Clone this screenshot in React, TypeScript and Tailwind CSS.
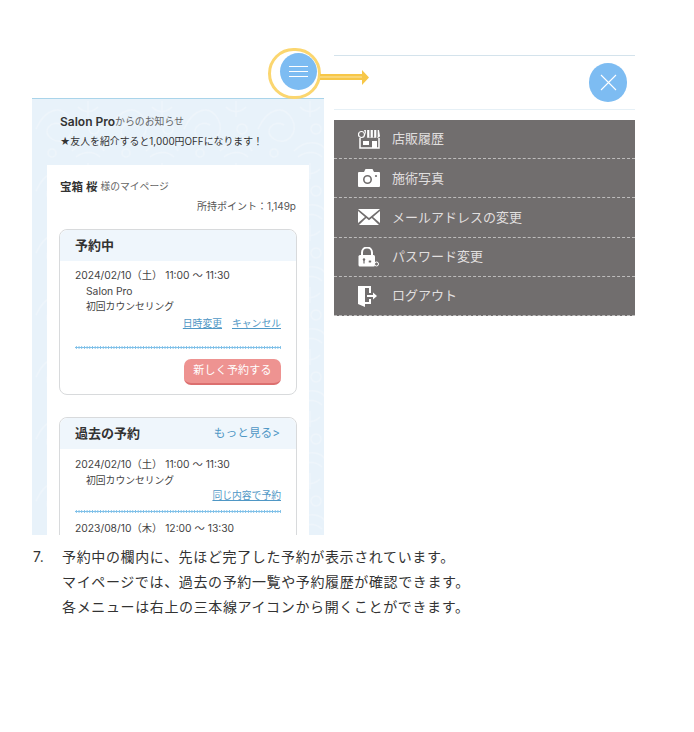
import React from "react";

const font = { fontFamily: '"Inter","Noto Sans CJK JP",sans-serif' };

function Store() {
  return (
    <svg width="22" height="20" viewBox="0 0 22 20" fill="none">
      <path d="M6 1h15l1 6a2 2 0 0 1-3.4 1 2 2 0 0 1-3.3 0 2 2 0 0 1-3.3 0 2 2 0 0 1-3.300 0z" fill="#fff" />
      <path d="M8.500 1v7M12 1v7M15.500 1v7M19 1v7" stroke="#716e6e" strokeWidth="1.300" />
      <circle cx="3.500" cy="5.500" r="3" stroke="#fff" strokeWidth="1.200" />
      <path d="M2 9v10h19V9" stroke="#fff" strokeWidth="1.500" />
      <rect x="14" y="12" width="5" height="7" fill="#fff" />
      <rect x="5" y="12" width="6" height="4" fill="#fff" />
    </svg>
  );
}
function Camera() {
  return (
    <svg width="22" height="18" viewBox="0 0 22 18">
      <path d="M1 3h5l1.500-3h7L16 3h5a1 1 0 0 1 1 1v13a1 1 0 0 1-1 1H1a1 1 0 0 1-1-1V4a1 1 0 0 1 1-1z" fill="#fff" />
      <circle cx="9.500" cy="10.500" r="3.700" fill="none" stroke="#716e6e" strokeWidth="1.600" />
      <circle cx="18" cy="7" r="1.100" fill="#716e6e" />
    </svg>
  );
}
function Mail() {
  return (
    <svg width="22" height="16" viewBox="0 0 22 16">
      <path d="M0 0h22L11 9z" fill="#fff" />
      <path d="M0 2l7 6-7 6zM22 2l-7 6 7 6zM8.200 9L11 11.300 13.800 9 21 16H1z" fill="#fff" />
    </svg>
  );
}
function Lock() {
  return (
    <svg width="22" height="20" viewBox="0 0 22 20">
      <path d="M4 8V5.500a5 5 0 0 1 10 0V8" fill="none" stroke="#fff" strokeWidth="2" />
      <rect x="0.500" y="8" width="16.500" height="11.500" rx="1.500" fill="#fff" />
      <circle cx="6" cy="12.500" r="1.200" fill="#716e6e" />
      <rect x="5.400" y="12.500" width="1.200" height="4" fill="#716e6e" />
      <circle cx="12" cy="14.500" r="1.600" fill="#716e6e" stroke="#fff" strokeWidth="0.700" />
      <circle cx="18.500" cy="17" r="2" fill="#716e6e" stroke="#fff" strokeWidth="1" />
      <path d="M13 15l4 1.500" stroke="#fff" strokeWidth="1" />
    </svg>
  );
}
function Logout() {
  return (
    <svg width="20" height="22" viewBox="0 0 20 22">
      <path d="M0 1h13v7h-2V3H7v14h4v-3h2v5H7v3l-7-3z" fill="#fff" />
      <path d="M9 10h6V7.500l4 3.500-4 3.500V12H9z" fill="#fff" />
    </svg>
  );
}

const menu: [React.ReactNode, string][] = [
  [<Store />, "店販履歴"],
  [<Camera />, "施術写真"],
  [<Mail />, "メールアドレスの変更"],
  [<Lock />, "パスワード変更"],
  [<Logout />, "ログアウト"],
];

function Link({ children }: { children: React.ReactNode }) {
  return <span className="text-[9.800px] leading-none text-[#4f97c5] underline">{children}</span>;
}

function Dots() {
  return <div className="h-[3px] bg-[radial-gradient(circle,#7fc0e8_1.100px,transparent_1.300px)] bg-[length:2.700px_3px]" />;
}

function Head({ children }: { children: React.ReactNode }) {
  return (
    <div className="flex h-[31px] items-center justify-between rounded-t-[8px] bg-[#eff6fc] pl-[15px] pr-[16px]">
      {children}
    </div>
  );
}

function Lace() {
  return (
    <svg className="absolute inset-0 h-full w-full" aria-hidden="true">
      <defs>
        <pattern id="lace" width="74" height="62" patternUnits="userSpaceOnUse">
          <g fill="none" stroke="#eef5fb" strokeWidth="1.500">
            <path d="M4 30c10-22 26-24 34-10s-6 28-18 20 0-20 10-14" />
            <path d="M40 52c12-12 28-10 32 0M44 58c8-6 18-6 24 0" />
            <path d="M46 8c6 6 14 6 20 0M56 2v16" />
            <circle cx="20" cy="54" r="4" />
            <circle cx="62" cy="30" r="5" />
          </g>
        </pattern>
      </defs>
      <rect width="100%" height="100%" fill="url(#lace)" />
    </svg>
  );
}

export default function App() {
  return (
    <div className="relative h-[732px] w-[694px] overflow-hidden bg-white text-[#333]" style={font}>
      <div className="flex items-start pl-[32px] pt-[46px]">
        <div className="flex h-[489px] w-[292px] flex-col overflow-hidden">
          <div className="flex h-[53px] shrink-0 justify-end border-b border-[#a9d4ea] bg-white pr-[7px] pt-[7px]">
            <div className="flex h-[37px] w-[37px] flex-col items-center justify-center gap-[4px] rounded-full bg-[#7dbcf2]">
              <div className="h-px w-[19px] bg-white" />
              <div className="h-px w-[19px] bg-white" />
              <div className="h-px w-[19px] bg-white" />
            </div>
          </div>
          <div className="relative flex min-h-0 flex-1 flex-col bg-[#e8f2fa] px-[15px]">
            <Lace />
            <div className="relative h-[66px] shrink-0 pl-[13px] pt-[14px] text-[9.900px]">
              <div className="flex h-[17px] items-center text-[#666]">
                <span className="text-[12px] font-semibold text-[#333]">Salon Pro</span>からのお知らせ
              </div>
              <div className="mt-[3px] flex h-[17px] items-center text-[#333]">★友人を紹介すると1,000円OFFになります！</div>
            </div>
            <div className="relative flex min-h-0 flex-1 flex-col bg-white px-[12px] pt-[14px]">
              <div className="flex h-[17px] items-center pl-[1px] text-[9.800px] text-[#666]">
                <span className="mr-[3px] text-[11.500px] font-semibold text-[#333]">宝箱 桜</span>様のマイページ
              </div>
              <div className="mt-[3px] flex h-[17px] items-center justify-end pr-px text-[10px] text-[#555]">
                所持ポイント：1,149p
              </div>
              <div className="mt-[15px] h-[166px] shrink-0 rounded-[8px] border border-[#d8dadc]">
                <Head>
                  <span className="text-[13px] font-semibold text-[#333]">予約中</span>
                </Head>
                <div className="px-[15px] pt-[7px] text-[10.300px] leading-[15.500px] text-[#444]">
                  <div>2024/02/10（土） 11:00 ～ 11:30</div>
                  <div className="pl-[11px]">Salon Pro</div>
                  <div className="pl-[11px] text-[9.800px]">初回カウンセリング</div>
                  <div className="mt-[1px] flex h-[16px] items-center justify-end gap-[10px]">
                    <Link>日時変更</Link>
                    <Link>キャンセル</Link>
                  </div>
                  <div className="mt-[14px]">
                    <Dots />
                  </div>
                  <div className="mt-[10px] flex justify-end">
                    <div className="flex h-[26px] w-[97px] items-center justify-center rounded-[7px] border-b-2 border-[#dc6f6f] bg-[#ee9391] text-[11px] tracking-[0.2px] text-white">
                      新しく予約する
                    </div>
                  </div>
                </div>
              </div>
              <div className="mt-[22px] h-[200px] shrink-0 rounded-[8px] border border-[#d8dadc]">
                <Head>
                  <span className="text-[13px] font-semibold text-[#333]">過去の予約</span>
                  <span className="text-[11.700px] text-[#4f97c5]">もっと見る&gt;</span>
                </Head>
                <div className="px-[15px] pt-[8px] text-[10.300px] leading-[15.500px] text-[#444]">
                  <div>2024/02/10（土） 11:00 ～ 11:30</div>
                  <div className="pl-[11px] text-[9.800px]">初回カウンセリング</div>
                  <div className="flex h-[16px] items-center justify-end">
                    <Link>同じ内容で予約</Link>
                  </div>
                  <div className="mt-[6px]">
                    <Dots />
                  </div>
                  <div className="mt-[8px]">2023/08/10（木） 12:00 ～ 13:30</div>
                </div>
              </div>
            </div>
          </div>
        </div>
        <div className="ml-[10px] mt-[9px] w-[301px]">
          <div className="flex h-[54px] justify-end border-t border-[#d4e3ec] pr-[8px] pt-[7px]">
            <div className="flex h-[39px] w-[38px] items-center justify-center rounded-full bg-[#7dbcf2]">
              <svg width="17" height="17" viewBox="0 0 17 17" stroke="#fff" strokeWidth="1.100">
                <path d="M1 1l15 15M16 1L1 16" />
              </svg>
            </div>
          </div>
          <div className="h-[11px] border-t border-[#e6f0f6]" />
          <div className="bg-[#716e6e]">
            {menu.map(([icon, label]) => (
              <div
                key={label}
                className="flex h-[39.200px] items-center border-b border-dashed border-[#bdbcbc] pl-[24px] text-[13px] text-[#e0dfdf]"
              >
                <div className="flex w-[34px] items-center">{icon}</div>
                {label}
              </div>
            ))}
          </div>
        </div>
      </div>
      <div className="mt-[9px] flex pl-[33px] text-[14px] leading-[25px] tracking-[0.63px] text-[#333]">
        <div className="w-[29px]">7.</div>
        <div>
          <div>予約中の欄内に、先ほど完了した予約が表示されています。</div>
          <div>マイページでは、過去の予約一覧や予約履歴が確認できます。</div>
          <div>各メニューは右上の三本線アイコンから開くことができます。</div>
        </div>
      </div>
      <div className="absolute left-[268px] top-[48px] h-[51px] w-[53px] rounded-full border-[3px] border-[#fbd66f]" />
      <svg className="absolute left-[320px] top-[69px]" width="50" height="17" viewBox="0 0 50 17">
        <path d="M0 5h42V1l7 7.500-7 7.500V11H0z" fill="#f7c748" />
        <path d="M0 8h42" stroke="#fbe6a6" strokeWidth="1" />
      </svg>
    </div>
  );
}
